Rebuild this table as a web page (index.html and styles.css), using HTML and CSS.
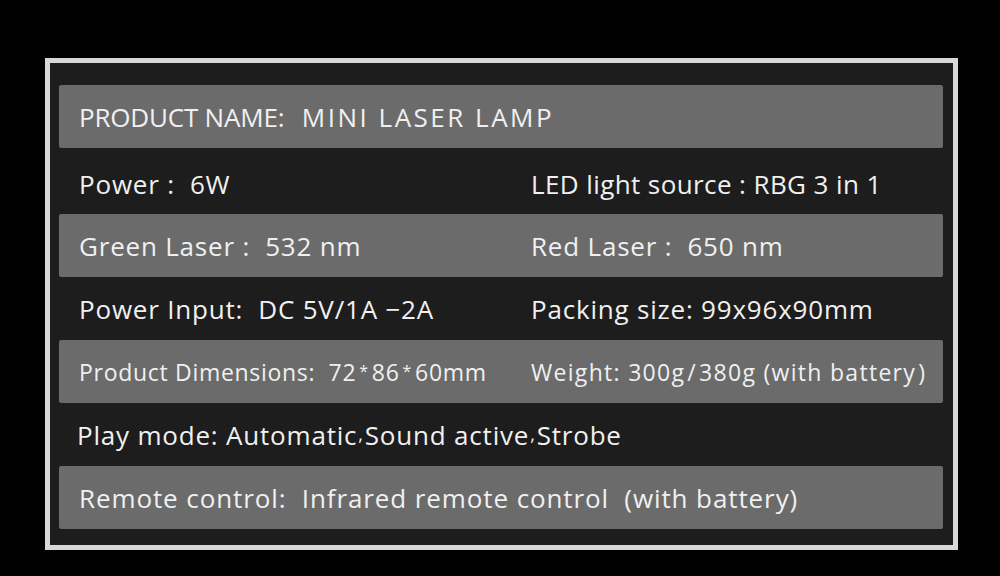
FILE: index.html
```html
<!DOCTYPE html>
<html lang="en">
<head>
    <meta charset="UTF-8">
    <meta name="viewport" content="width=device-width, initial-scale=1.0">
    <title>Mini Laser Lamp</title>
    <link rel="stylesheet" href="styles.css">
</head>
<body>
    <div class="sheet">
        <div class="row bar">
            <span class="big">PRODUCT NAME: <em>MINI LASER LAMP</em></span>
        </div>
        <div class="row tall">
            <span>Power :&nbsp; 6W</span>
            <span class="tight">LED light source : RBG 3 in 1</span>
        </div>
        <div class="row bar">
            <span>Green Laser :&nbsp; 532 nm</span>
            <span>Red Laser :&nbsp; 650 nm</span>
        </div>
        <div class="row">
            <span>Power Input:&nbsp; DC 5V/1A &minus;2A</span>
            <span>Packing size: 99x96x90mm</span>
        </div>
        <div class="row bar small">
            <span>Product Dimensions:&nbsp; 72<i>*</i>86<i>*</i>60mm</span>
            <span class="weight">Weight: 300g<i>/</i>380g (with battery<i>)</i></span>
        </div>
        <div class="row single">
            <span>Play mode: Automatic<b>,</b>Sound active<b>,</b>Strobe</span>
        </div>
        <div class="row bar single wide">
            <span>Remote control:&nbsp; Infrared remote control&nbsp; (with battery)</span>
        </div>
    </div>
</body>
</html>
```

FILE: styles.css
```css
*{
    margin: 0;
    padding: 0;
    box-sizing: border-box;
}
body{
    font-family: "Open Sans", "Noto Sans", sans-serif;
    background-color: #000;
    width: 1000px;
    height: 576px;
    padding: 58px 0 0 45px;
    overflow: hidden;
}

.sheet{
    width: 913px;
    height: 492px;
    border: 5px solid #d8d8d8;
    background-color: #1d1d1d;
    padding: 22px 10px 16px 9px;
    display: flex;
    flex-direction: column;
}

.row{
    height: 63px;
    display: grid;
    grid-template-columns: 452px 1fr;
    align-items: center;
    padding-left: 20px;
    color: #f0f0f0;
    font-size: 26px;
    letter-spacing: 0.8px;
    white-space: nowrap;
}
.row.tall{
    height: 66px;
    padding-top: 6px;
}
.bar{
    background-color: #6b6b6b;
    border-radius: 2px;
}
.big{
    grid-column: 1 / 3;
    letter-spacing: -0.2px;
}
.big em{
    font-style: normal;
    letter-spacing: 2.5px;
    margin-left: 11px;
}
.tight{
    letter-spacing: 0.4px;
}
.single{
    grid-template-columns: 1fr;
    padding-left: 18px;
}
.single.wide{
    padding-left: 20px;
    letter-spacing: 0.9px;
}
.small{
    font-size: 23px;
    letter-spacing: 0.7px;
}
.small i{
    font-style: normal;
    font-size: 16px;
    position: relative;
    top: -4px;
    padding: 0 3px;
}
.weight{
    letter-spacing: 1.3px;
}
.weight i{
    font-size: 23px;
    top: 0;
    padding: 0 2px;
}
.single b{
    font-weight: normal;
    font-size: 18px;
    position: relative;
    top: -4px;
    padding: 0 1px;
}
```
